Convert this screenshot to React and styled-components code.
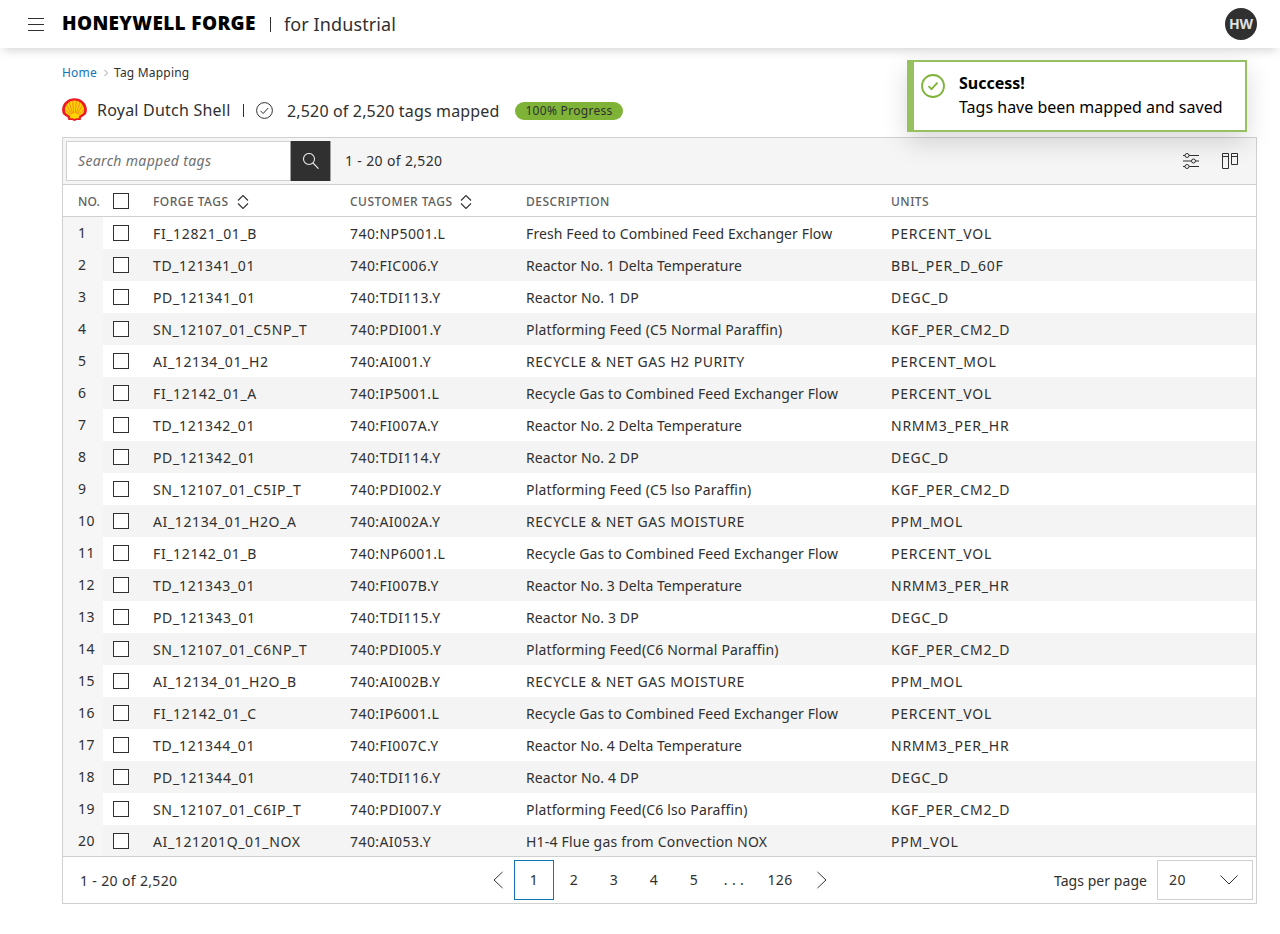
import React from "react";
import styled, { createGlobalStyle } from "styled-components";

const Global = createGlobalStyle`
  *, *::before, *::after { box-sizing: border-box; }
  body { margin: 0; background: #fff; color: #303030; font: 14px/20px "Noto Sans", "Liberation Sans", sans-serif; }
  svg { display: block; flex: none; }
`;

const Page = styled.div`
  width: 1280px;
  height: 934px;
  overflow: hidden;
  position: relative;
`;

const Header = styled.header`
  height: 48px;
  display: flex;
  align-items: center;
  padding: 0 23px 0 28px;
  background: #fff;
  box-shadow: 0 5px 10px -3px rgba(0, 0, 0, 0.18);
`;

const Brand = styled.div`
  width: 194px;
  margin-left: 18px;
  padding-bottom: 2px;
  color: #000;
  font-size: 19px;
  font-weight: 900;
  line-height: 24px;
  letter-spacing: 0.35px;
  white-space: nowrap;
`;

const Rule = styled.span`
  width: 1px;
  height: ${(p) => p.$h}px;
  margin: 0 ${(p) => p.$after}px 0 ${(p) => p.$before || 0}px;
  background: #303030;
`;

const Product = styled.div`
  padding-bottom: 1px;
  font-size: 18px;
  line-height: 24px;
  letter-spacing: 0.1px;
`;

const Avatar = styled.div`
  width: 32px;
  height: 32px;
  margin-left: auto;
  border-radius: 50%;
  background: #303030;
  color: #e0e0e0;
  font-size: 14px;
  font-weight: 700;
  line-height: 32px;
  text-align: center;
`;

const Main = styled.main`
  padding: 15px 23px 0 62px;
`;

const Crumbs = styled.nav`
  display: flex;
  align-items: center;
  height: 20px;
  font-size: 12px;
  letter-spacing: 0.2px;
`;

const Link = styled.a`
  width: 42px;
  color: #1274b7;
`;

const Summary = styled.div`
  display: flex;
  align-items: center;
  height: 28px;
  margin: 13px 0 13px;
  font-size: 16px;
  white-space: nowrap;
`;

const Company = styled.span`
  width: 146px;
  margin-left: 10px;
  letter-spacing: 0.22px;
`;

const Mapped = styled.span`
  width: 228px;
  padding-top: 2px;
  margin-left: 14px;
  letter-spacing: 0.16px;
`;

const Pill = styled.span`
  width: 108px;
  height: 18px;
  margin-top: 2px;
  border-radius: 9px;
  background: #7eb338;
  font-size: 12px;
  line-height: 18px;
  letter-spacing: 0.3px;
  text-align: center;
`;

const Panel = styled.section`
  height: 767px;
  border: 1px solid #d0d0d0;
  display: flex;
  flex-direction: column;
`;

const Toolbar = styled.div`
  height: 47px;
  display: flex;
  align-items: center;
  padding: 0 17px 0 3px;
  background: #f5f5f5;
  border-bottom: 1px solid #d0d0d0;
`;

const SearchField = styled.div`
  width: 224px;
  height: 40px;
  padding-left: 11px;
  background: #fff;
  border: 1px solid #d0d0d0;
  border-right: 0;
  color: #707070;
  font-style: italic;
  line-height: 38px;
  letter-spacing: 0.34px;
`;

const SearchButton = styled.button`
  width: 41px;
  height: 40px;
  padding: 0;
  border: 1px solid #a0a0a0;
  border-width: 0 1px;
  background: #303030;
  display: grid;
  place-items: center;
`;

const Count = styled.span`
  margin-left: ${(p) => p.$left}px;
  padding-top: ${(p) => p.$drop || 0}px;
  letter-spacing: 0.35px;
`;

const Tools = styled.div`
  display: flex;
  gap: 23px;
  margin-left: auto;
`;

const Row = styled.div`
  display: grid;
  grid-template-columns: 40px 50px 197px 176px 365px 1fr;
  height: 32px;
  flex: none;
  background: ${(p) => (p.$shaded ? "#f4f4f4" : "#fff")};
`;

const HeadRow = styled(Row)`
  border-bottom: 1px solid #d0d0d0;
  color: #606060;
  font-size: 12px;
  font-weight: 500;
  letter-spacing: 0.48px;
`;

const HeadCell = styled.div`
  display: flex;
  align-items: center;
  gap: 8px;
  padding-top: 2px;
  padding-left: ${(p) => p.$pad || 0}px;
  letter-spacing: ${(p) => (p.$pad ? "0.1px" : "inherit")};
  white-space: nowrap;
`;

const Num = styled.div`
  padding: 6px 0 0 15px;
  background: #f6f6f6;
  letter-spacing: 0.5px;
`;

const Check = styled.div`
  width: 16px;
  height: 16px;
  margin: 8px 0 0 10px;
  border: 1px solid #303030;
  background: #fff;
`;

const Cell = styled.div`
  padding-top: 7px;
  letter-spacing: ${(p) => p.$ls}px;
  white-space: nowrap;
`;

const Body = styled.div`
  height: 639px;
  overflow: hidden;
`;

const Footer = styled.footer`
  flex: 1;
  display: grid;
  grid-template-columns: 413px 334px 1fr;
  align-items: center;
  padding: 0 3px 0 17px;
  border-top: 1px solid #d0d0d0;
`;

const Pager = styled.div`
  display: flex;
  align-items: center;
`;

const Pages = styled.div`
  display: flex;
  margin: 0 11px;
  letter-spacing: 0.4px;
`;

const PageButton = styled.div`
  width: ${(p) => p.$w || 40}px;
  height: 40px;
  border: 1px solid ${(p) => (p.$active ? "#1274b7" : "transparent")};
  line-height: 38px;
  text-align: center;
`;

const PageSize = styled.div`
  display: flex;
  align-items: center;
  justify-content: flex-end;
  gap: 10px;
`;

const PageSizeLabel = styled.span`
  padding-top: 2px;
  letter-spacing: 0.05px;
`;

const Select = styled.div`
  width: 96px;
  height: 40px;
  display: flex;
  align-items: center;
  justify-content: space-between;
  padding: 0 14px 0 11px;
  border: 1px solid #d0d0d0;
  letter-spacing: 0.5px;
`;

const Toast = styled.aside`
  position: absolute;
  left: 907px;
  top: 60px;
  width: 340px;
  height: 72px;
  display: flex;
  align-items: flex-start;
  gap: 14px;
  padding: 9px 0 0 7px;
  background: #fff;
  border: 2px solid #97c160;
  border-left-width: 7px;
  box-shadow: 0 10px 26px rgba(0, 0, 0, 0.15);
  color: #000;
  font-size: 16px;
  line-height: 24px;
`;

const ToastIcon = styled.div`
  padding-top: 3px;
`;

const ToastText = styled.div`
  font-weight: ${(p) => (p.$strong ? 700 : 400)};
  white-space: nowrap;
`;

const Shell = () => (
  <svg width="25" height="24" viewBox="0 0 25 24">
    <path d="M12.500 .2C19 .2 24.700 5 24.900 11.500c.1 2.600-.7 4.300-1.600 5.300l-4.300 2.900-.3 2.300h-3.800l-2.400 1-2.400-1H6.300L6 19.700 1.700 16.800C.8 15.800 0 14.100.1 11.500.3 5 6 .2 12.500.2Z" fill="#ed1c24" />
    <path d="M12.500 2.600c5 0 9.300 4 9.600 9 0 1.700-.4 2.800-1 3.600l-4.200 3v2h-2.500l-1.900.8-1.900-.8H8.100v-2l-4.200-3c-.6-.8-1-1.900-1-3.600C3.200 6.600 7.500 2.600 12.500 2.600Z" fill="#ffd500" />
    <path d="M11.700 15 10.700 3M13.300 15l1-12M10.600 15.500 7 4M14.400 15.500l3.600-11.500M9.600 16 4.300 7M15.400 16l5.300-9M8.600 17 2.600 11M16.400 17l6-6" stroke="#f0502a" strokeWidth=".6" fill="none" />
  </svg>
);

const CheckCircle = ({ size, color, weight, d }) => (
  <svg width={size} height={size} viewBox={`0 0 ${size} ${size}`} fill="none" stroke={color} strokeWidth={weight}>
    <circle cx={size / 2} cy={size / 2} r={size / 2 - weight / 2 - 0.1} />
    <path d={d} />
  </svg>
);

const Line = ({ w, h, d, color = "#303030", weight = 1 }) => (
  <svg width={w} height={h} viewBox={`0 0 ${w} ${h}`} fill="none" stroke={color} strokeWidth={weight}>
    <path d={d} />
  </svg>
);

const Sort = () => <Line w={12} h={14} weight={1.1} d="M1 5.500l5-5 5 5M1 8.500l5 5 5-5" />;

const descriptionSpacing = (text) => {
  if (text === text.toUpperCase()) return 0.52;
  if (text.includes("Temperature")) return 0.02;
  if (text.includes("Paraffin")) return 0.16;
  return text.includes("NOX") ? 0.2 : 0.11;
};

const data = [
  ["FI_12821_01_B", "740:NP5001.L", "Fresh Feed to Combined Feed Exchanger Flow", "PERCENT_VOL"],
  ["TD_121341_01", "740:FIC006.Y", "Reactor No. 1 Delta Temperature", "BBL_PER_D_60F"],
  ["PD_121341_01", "740:TDI113.Y", "Reactor No. 1 DP", "DEGC_D"],
  ["SN_12107_01_C5NP_T", "740:PDI001.Y", "Platforming Feed (C5 Normal Paraffin)", "KGF_PER_CM2_D"],
  ["AI_12134_01_H2", "740:AI001.Y", "RECYCLE & NET GAS H2 PURITY", "PERCENT_MOL"],
  ["FI_12142_01_A", "740:IP5001.L", "Recycle Gas to Combined Feed Exchanger Flow", "PERCENT_VOL"],
  ["TD_121342_01", "740:FI007A.Y", "Reactor No. 2 Delta Temperature", "NRMM3_PER_HR"],
  ["PD_121342_01", "740:TDI114.Y", "Reactor No. 2 DP", "DEGC_D"],
  ["SN_12107_01_C5IP_T", "740:PDI002.Y", "Platforming Feed (C5 lso Paraffin)", "KGF_PER_CM2_D"],
  ["AI_12134_01_H2O_A", "740:AI002A.Y", "RECYCLE & NET GAS MOISTURE", "PPM_MOL"],
  ["FI_12142_01_B", "740:NP6001.L", "Recycle Gas to Combined Feed Exchanger Flow", "PERCENT_VOL"],
  ["TD_121343_01", "740:FI007B.Y", "Reactor No. 3 Delta Temperature", "NRMM3_PER_HR"],
  ["PD_121343_01", "740:TDI115.Y", "Reactor No. 3 DP", "DEGC_D"],
  ["SN_12107_01_C6NP_T", "740:PDI005.Y", "Platforming Feed(C6 Normal Paraffin)", "KGF_PER_CM2_D"],
  ["AI_12134_01_H2O_B", "740:AI002B.Y", "RECYCLE & NET GAS MOISTURE", "PPM_MOL"],
  ["FI_12142_01_C", "740:IP6001.L", "Recycle Gas to Combined Feed Exchanger Flow", "PERCENT_VOL"],
  ["TD_121344_01", "740:FI007C.Y", "Reactor No. 4 Delta Temperature", "NRMM3_PER_HR"],
  ["PD_121344_01", "740:TDI116.Y", "Reactor No. 4 DP", "DEGC_D"],
  ["SN_12107_01_C6IP_T", "740:PDI007.Y", "Platforming Feed(C6 lso Paraffin)", "KGF_PER_CM2_D"],
  ["AI_121201Q_01_NOX", "740:AI053.Y", "H1-4 Flue gas from Convection NOX", "PPM_VOL"],
];

export default function App() {
  return (
    <Page>
      <Global />
      <Header>
        <Line w={16} h={13} d="M0 .5h16M0 6.500h16M0 12.500h16" />
        <Brand>HONEYWELL FORGE</Brand>
        <Rule $h={15} $before={14} $after={13} />
        <Product>for Industrial</Product>
        <Avatar>HW</Avatar>
      </Header>
      <Main>
        <Crumbs>
          <Link>Home</Link>
          <Line w={10} h={8} color="#a0a0a0" d="M.5 1l3 3-3 3" />
          <span>Tag Mapping</span>
        </Crumbs>
        <Summary>
          <Shell />
          <Company>Royal Dutch Shell</Company>
          <Rule $h={13} $after={12} />
          <CheckCircle size={17} color="#303030" weight={1} d="M4.500 8.800l2.700 2.700 5-5.500" />
          <Mapped>2,520 of 2,520 tags mapped</Mapped>
          <Pill>100% Progress</Pill>
        </Summary>
        <Panel>
          <Toolbar>
            <SearchField>Search mapped tags</SearchField>
            <SearchButton>
              <Line w={16} h={16} color="#e8e8e8" weight={1.1} d="M11.500 6a5.500 5.500 0 1 1-11 0a5.500 5.500 0 0 1 11 0M10 10l5.500 5.700" />
            </SearchButton>
            <Count $left={14}>1 - 20 of 2,520</Count>
            <Tools>
              <Line w={16} h={16} d="M0 2.500h2M6 2.500h10M0 8h8.500M12.500 8H16M0 13.500h2M6 13.500h10M6 2.500a2 2 0 1 1-4 0a2 2 0 0 1 4 0M12.500 8a2 2 0 1 1-4 0a2 2 0 0 1 4 0M6 13.500a2 2 0 1 1-4 0a2 2 0 0 1 4 0" />
              <Line w={17} h={16} d="M.5 .5h6v15h-6zM.5 3.500h6M9.500 .5h6v11h-6zM9.500 3.500h6" />
            </Tools>
          </Toolbar>
          <HeadRow>
            <HeadCell $pad={15}>NO.</HeadCell>
            <Check />
            <HeadCell>FORGE TAGS <Sort /></HeadCell>
            <HeadCell>CUSTOMER TAGS <Sort /></HeadCell>
            <HeadCell>DESCRIPTION</HeadCell>
            <HeadCell>UNITS</HeadCell>
          </HeadRow>
          <Body>
            {data.map(([forge, customer, description, units], i) => (
              <Row key={i} $shaded={i % 2 === 1}>
                <Num>{i + 1}</Num>
                <Check />
                <Cell $ls={0.63}>{forge}</Cell>
                <Cell $ls={0.43}>{customer}</Cell>
                <Cell $ls={descriptionSpacing(description)}>{description}</Cell>
                <Cell $ls={0.76}>{units}</Cell>
              </Row>
            ))}
          </Body>
          <Footer>
            <Count $left={0} $drop={2}>1 - 20 of 2,520</Count>
            <Pager>
              <Line w={10} h={18} d="M9.500 1l-8.500 8 8.500 8" />
              <Pages>
                <PageButton $active>1</PageButton>
                <PageButton>2</PageButton>
                <PageButton>3</PageButton>
                <PageButton>4</PageButton>
                <PageButton>5</PageButton>
                <PageButton>. . .</PageButton>
                <PageButton $w={52}>126</PageButton>
              </Pages>
              <Line w={10} h={18} d="M.5 1l8.500 8-8.500 8" />
            </Pager>
            <PageSize>
              <PageSizeLabel>Tags per page</PageSizeLabel>
              <Select>
                20
                <Line w={18} h={10} d="M.5 .5l8.500 8.500 8.500-8.500" />
              </Select>
            </PageSize>
          </Footer>
        </Panel>
      </Main>
      <Toast>
        <ToastIcon>
          <CheckCircle size={24} color="#7eb338" weight={1.8} d="M7.500 12.200l3 3 6-6.500" />
        </ToastIcon>
        <div>
          <ToastText $strong>Success!</ToastText>
          <ToastText>Tags have been mapped and saved</ToastText>
        </div>
      </Toast>
    </Page>
  );
}
